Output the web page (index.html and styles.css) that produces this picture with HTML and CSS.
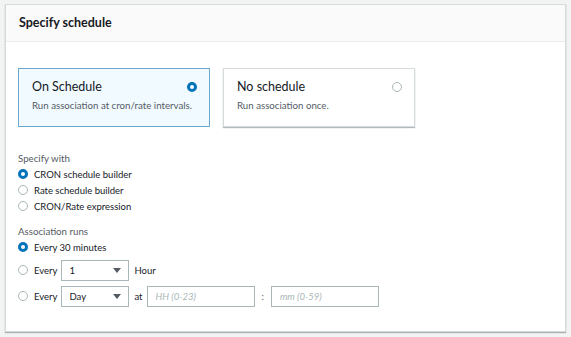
FILE: index.html
```html
<!DOCTYPE html>
<html>
<head>
  <link rel="stylesheet" href="styles.css">
</head>
<body>
  <div class="panel">
    <div class="panel_header">Specify schedule</div>
    <div class="panel_body">
      <div class="tiles">
        <div class="tile tile_selected">
          <div class="tile_title">On Schedule <span class="radio radio_on"></span></div>
          <div class="tile_desc">Run association at cron/rate intervals.</div>
        </div>
        <div class="tile">
          <div class="tile_title">No schedule <span class="radio"></span></div>
          <div class="tile_desc">Run association once.</div>
        </div>
      </div>

      <div class="label">Specify with</div>
      <div class="option"><span class="radio radio_on"></span>CRON schedule builder</div>
      <div class="option"><span class="radio"></span>Rate schedule builder</div>
      <div class="option"><span class="radio"></span>CRON/Rate expression</div>

      <div class="label label_second">Association runs</div>
      <div class="option"><span class="radio radio_on"></span>Every 30 minutes</div>
      <div class="option option_field first_field">
        <span class="radio"></span>Every
        <div class="select">1<span class="caret"></span></div>
        Hour
      </div>
      <div class="option option_field">
        <span class="radio"></span>Every
        <div class="select">Day<span class="caret"></span></div>
        at
        <div class="input">HH (0-23)</div>
        <span class="colon">:</span>
        <div class="input">mm (0-59)</div>
      </div>
    </div>
  </div>
</body>
</html>
```

FILE: styles.css
```css
body {
  margin: 0;
  padding: 4px 5px;
  background-color: #f2f3f3;
  font-family: Lato, "Open Sans", sans-serif;
  color: #16191f;
}
.panel {
  width: 559px;
  height: 326px;
  background-color: white;
  border: 1px solid #d5dbdb;
  box-shadow: 0 1px 1px 0 rgba(0,28,36,0.3);
}
.panel_header {
  height: 36px;
  line-height: 36px;
  padding: 0 13px;
  background-color: #fafafa;
  border-bottom: 1px solid #eaeded;
  font-weight: bold;
  font-size: 12.5px;
}
.panel_body {
  padding: 26px 12px 0 12px;
}
.tiles {
  display: flex;
  gap: 13px;
}
.tile {
  box-sizing: border-box;
  width: 192px;
  height: 59px;
  padding: 10px 12px 0 13px;
  border: 1px solid #d5dbdb;
  box-shadow: 0 1px 1px 0 rgba(0,28,36,0.3);
  background-color: white;
}
.tile_selected {
  border-color: #6aa8cf;
  background-color: #f1faff;
  box-shadow: none;
}
.tile_title {
  display: flex;
  justify-content: space-between;
  align-items: center;
  font-size: 12.5px;
  line-height: 16px;
}
.tile_desc {
  font-size: 9.7px;
  line-height: 12px;
  color: #545b64;
  margin-top: 4px;
  white-space: nowrap;
}
.radio {
  display: inline-block;
  box-sizing: border-box;
  width: 10px;
  height: 10px;
  border-radius: 50%;
  border: 1px solid #aab7b8;
  background-color: white;
  flex-shrink: 0;
}
.radio_on {
  border: 3px solid #0073bb;
}
.label {
  font-size: 9.7px;
  line-height: 13px;
  color: #545b64;
  margin-top: 25px;
  margin-bottom: 1px;
}
.label_second {
  margin-top: 11px;
}
.option {
  display: flex;
  align-items: center;
  gap: 6px;
  font-size: 9.5px;
  height: 16px;
}
.option_field {
  height: 26px;
  gap: 4px;
}
.first_field {
  margin-top: 2px;
}
.option_field .radio {
  margin-right: 2px;
}
.select {
  position: relative;
  box-sizing: border-box;
  width: 68px;
  height: 21px;
  line-height: 19px;
  padding-left: 7px;
  border: 1px solid #aab7b8;
  margin-right: 1px;
}
.caret {
  position: absolute;
  right: 7px;
  top: 7px;
  border-left: 4px solid transparent;
  border-right: 4px solid transparent;
  border-top: 5px solid #545b64;
}
.input {
  box-sizing: border-box;
  width: 108px;
  height: 21px;
  line-height: 19px;
  padding-left: 8px;
  border: 1px solid #aab7b8;
  color: #aab7b8;
  font-style: italic;
}
.colon {
  color: #545b64;
  margin: 0 3px;
}
```
